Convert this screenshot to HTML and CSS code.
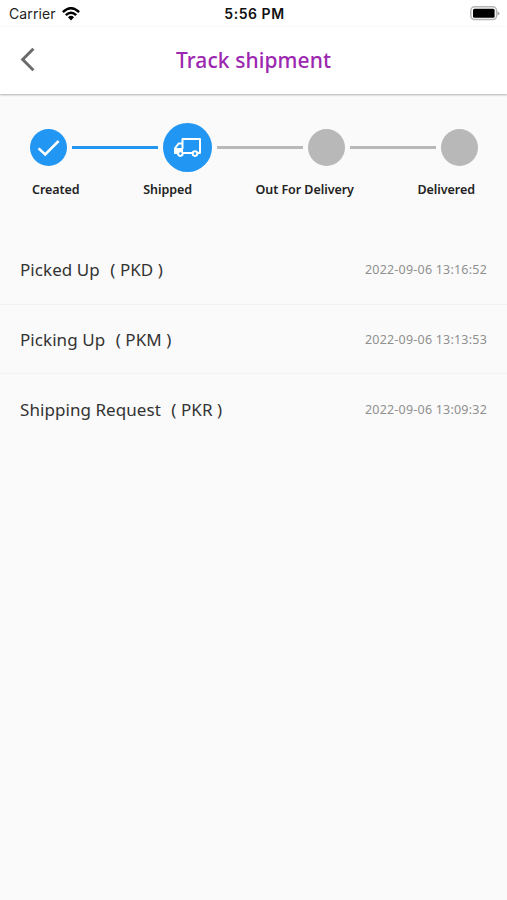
FILE: index.html
```html
<!DOCTYPE html>
<html lang="en">
<head>
<meta charset="utf-8">
<title>Track shipment</title>
<link rel="stylesheet" href="styles.css">
</head>
<body>
<div class="status">
  <div class="carrier"><span>Carrier</span>
    <svg width="18" height="14" viewBox="0 0 18 14" fill="none" stroke="#000" stroke-width="2.5"><path d="M.9 5.1Q9-2.5 17.1 5.1M3.8 8.1Q9 3.3 14.2 8.1"/><path d="M6 10.2Q9 7.5 12 10.2L9 13.5Z" fill="#000" stroke="none"/></svg>
  </div>
  <div class="clock">5:56 PM</div>
  <svg class="battery" width="31" height="15" viewBox="0 0 31 15"><rect x="1.8" y=".8" width="25.8" height="12.8" rx="3.8" fill="#fff" stroke="#b5b5b5" stroke-width="1.5"/><rect x="4" y="2.8" width="21.6" height="9" rx="1.5"/><path d="M28.5 5.2Q30.6 6 30.6 7.4T28.5 9.6Z" fill="#aaa"/></svg>
</div>
<header class="bar">
  <svg class="back" width="16" height="26" viewBox="0 0 16 26" fill="none" stroke="#6b6b6b" stroke-width="3"><path d="M13.4 1.8 2.7 12.5 13.4 23.2"/></svg>
  <h1 class="title">Track shipment</h1>
</header>
<main>
  <div class="steps">
    <div class="dot done"><svg width="37" height="37" viewBox="0 0 37 37" fill="none" stroke="#fff" stroke-width="2.5"><path d="M8.6 19.3 15.2 25.5 28.6 12"/></svg></div>
    <div class="line done"></div>
    <div class="dot current"><svg width="49" height="49" viewBox="0 0 49 49" fill="none" stroke="#fff" stroke-width="2" stroke-linejoin="round"><path d="M19.5 20.5H15.6L12.2 25V30H19.5M19.5 26V16H37V30H19.5"/><path d="M11.3 25H20V31H11.3Z" fill="#fff" stroke="none"/><circle cx="17.4" cy="30.6" r="2.3" fill="#2196f3"/><circle cx="32" cy="30.6" r="2.3" fill="#2196f3"/></svg></div>
    <div class="line"></div>
    <div class="dot"></div>
    <div class="line"></div>
    <div class="dot"></div>
  </div>
  <div class="labels"><span>Created</span><span>Shipped</span><span>Out For Delivery</span><span>Delivered</span></div>
  <ul class="events">
    <li><span class="name">Picked Up <span class="code">( PKD )</span></span><time>2022-09-06 13:16:52</time></li>
    <li><span class="name">Picking Up <span class="code">( PKM )</span></span><time>2022-09-06 13:13:53</time></li>
    <li><span class="name">Shipping Request <span class="code">( PKR )</span></span><time>2022-09-06 13:09:32</time></li>
  </ul>
</main>
</body>
</html>
```

FILE: styles.css
```css
* { box-sizing: border-box; }
body { margin: 0; min-height: 900px; background: #fafafa; color: #333; font-family: "Noto Sans", sans-serif; }
svg { display: block; }
.status { display: grid; grid-template-columns: 1fr auto 1fr; align-items: center; height: 27px; padding: 0 7px 0 9px; background: #fff; font: 14px/27px Inter, sans-serif; color: #222; }
.carrier { display: flex; align-items: center; gap: 6px; letter-spacing: .1px; }
.clock { font-weight: 600; color: #111; letter-spacing: .55px; }
.battery { justify-self: end; }
.bar { display: grid; grid-template-columns: 40px 1fr 40px; align-items: center; height: 67px; padding: 0 20px 2px; background: #fff; box-shadow: 0 1px 2px rgba(0,0,0,.3); }
.title { margin: 0; text-align: center; font-size: 21px; line-height: 30px; font-weight: 500; color: #9c27b0; white-space: nowrap; letter-spacing: .08px; }
.steps { display: flex; align-items: center; gap: 5px; height: 49px; margin: 29px 29px 0 30px; }
.dot { flex: none; width: 37px; height: 37px; border-radius: 50%; background: #b8b8b8; }
.dot.current { width: 49px; height: 49px; }
.dot.done, .dot.current, .line.done { background: #2196f3; }
.line { flex: 1; height: 2.5px; background: #b8b8b8; }
.labels { display: flex; justify-content: space-between; padding: 0 32px; margin-top: 8px; font-size: 12.5px; line-height: 20px; font-weight: 600; color: #222; white-space: nowrap; letter-spacing: -.05px; }
.events { list-style: none; margin: 35px 0 0; padding: 0; }
.events li { display: flex; justify-content: space-between; align-items: center; height: 69.5px; padding: 1px 20px 0; border-bottom: 1px solid #f2f2f2; }
.events li:last-child { border-bottom: 0; }
.name { font-size: 17px; white-space: nowrap; letter-spacing: .06px; }
.code { margin-left: 6px; }
time { font-size: 12.5px; color: #909090; white-space: nowrap; letter-spacing: .21px; }
```
